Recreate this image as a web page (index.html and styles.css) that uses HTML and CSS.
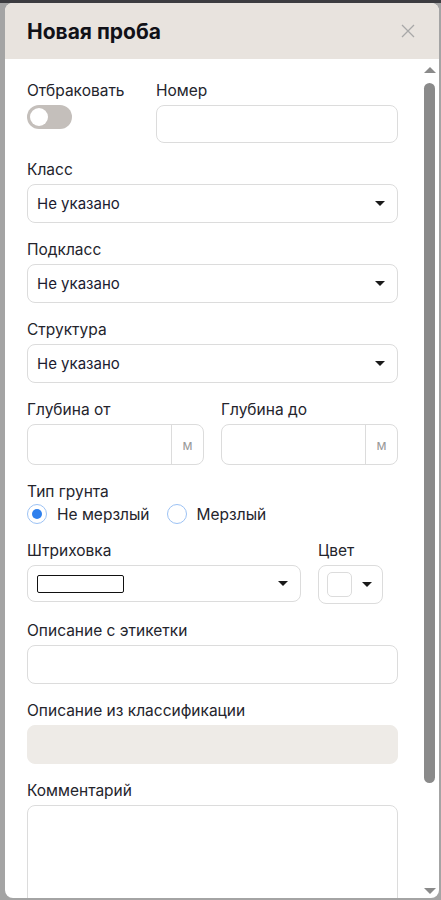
FILE: index.html
```html
<!DOCTYPE html>
<html lang="ru">
<head>
<meta charset="utf-8">
<title>Новая проба</title>
<link rel="stylesheet" href="styles.css">
</head>
<body>
<div class="topline"></div>
<div class="modal">
  <div class="modal-header">
    <h1 class="title">Новая проба</h1>
    <span class="close" aria-label="Закрыть">
      <svg width="14" height="14" viewBox="0 0 14 14"><path d="M1 1L13 13M13 1L1 13" stroke="#a8a8a8" stroke-width="1.3" fill="none"/></svg>
    </span>
  </div>
  <div class="modal-body">
    <div class="content">
      <div class="row row-first">
        <div class="field">
          <label class="label">Отбраковать</label>
          <span class="toggle"><span class="knob"></span></span>
        </div>
        <div class="field">
          <label class="label">Номер</label>
          <div class="input"></div>
        </div>
      </div>

      <div class="field">
        <label class="label">Класс</label>
        <div class="input select"><span class="value">Не указано</span><span class="caret"></span></div>
      </div>
      <div class="field">
        <label class="label">Подкласс</label>
        <div class="input select"><span class="value">Не указано</span><span class="caret"></span></div>
      </div>
      <div class="field">
        <label class="label">Структура</label>
        <div class="input select"><span class="value">Не указано</span><span class="caret"></span></div>
      </div>

      <div class="row row-half">
        <div class="field">
          <label class="label">Глубина от</label>
          <div class="input suffixed tall"><span class="grow"></span><span class="suffix">м</span></div>
        </div>
        <div class="field">
          <label class="label">Глубина до</label>
          <div class="input suffixed tall"><span class="grow"></span><span class="suffix">м</span></div>
        </div>
      </div>

      <div class="field field-radio">
        <label class="label">Тип грунта</label>
        <div class="radios">
          <span class="radio checked"><span class="circle"></span>Не мерзлый</span>
          <span class="radio"><span class="circle"></span>Мерзлый</span>
        </div>
      </div>

      <div class="row row-hatch">
        <div class="field">
          <label class="label">Штриховка</label>
          <div class="input select hatch"><span class="pattern"></span><span class="caret"></span></div>
        </div>
        <div class="field">
          <label class="label">Цвет</label>
          <div class="input color"><span class="swatch"></span><span class="caret"></span></div>
        </div>
      </div>

      <div class="field">
        <label class="label">Описание с этикетки</label>
        <div class="input"></div>
      </div>
      <div class="field">
        <label class="label">Описание из классификации</label>
        <div class="input disabled"></div>
      </div>
      <div class="field">
        <label class="label">Комментарий</label>
        <div class="input textarea"></div>
      </div>
    </div>
    <div class="scrollbar">
      <span class="arrow up"></span>
      <span class="thumb"></span>
      <span class="spacer"></span>
      <span class="arrow down"></span>
    </div>
  </div>
</div>
</body>
</html>
```

FILE: styles.css
```css
html, body {
  margin: 0;
  padding: 0;
}
body {
  background: #a4a4a4;
  font-family: Inter, "Noto Sans", "Liberation Sans", sans-serif;
  color: #1d1d28;
  height: 900px;
  overflow: hidden;
}
.topline {
  height: 3px;
  background: #3c3c40;
}
.modal {
  margin-left: 5px;
  width: 434px;
  height: 895px;
  background: #fff;
  border-radius: 8px;
  overflow: hidden;
  display: flex;
  flex-direction: column;
}
.modal-header {
  height: 56px;
  flex: none;
  background: #e8e3de;
  display: flex;
  align-items: center;
  justify-content: space-between;
  padding: 0 24px 0 22px;
}
.title {
  margin: 0;
  font-size: 21px;
  font-weight: 700;
  color: #111118;
}
.close {
  display: flex;
  width: 14px;
  height: 14px;
}
.modal-body {
  flex: 1;
  display: flex;
  min-height: 0;
}
.content {
  width: 371px;
  padding: 22px 0 0 22px;
  display: flex;
  flex-direction: column;
  gap: 17px;
}
.field {
  display: flex;
  flex-direction: column;
  gap: 4px;
  min-width: 0;
}
.label {
  font-size: 15.5px;
  line-height: 20px;
  color: #24242c;
}
.row {
  display: grid;
  column-gap: 17px;
}
.row-first {
  grid-template-columns: 112px 1fr;
}
.row-half {
  grid-template-columns: 1fr 1fr;
}
.row-hatch {
  grid-template-columns: 274px 65px;
}
.input {
  box-sizing: border-box;
  height: 39px;
  border: 1px solid #dcdcdc;
  border-radius: 8px;
  background: #fff;
  display: flex;
  align-items: center;
}
.row-first .input {
  height: 38px;
}
.tall {
  height: 41px;
}
.select {
  padding: 0 12px 0 9px;
  justify-content: space-between;
}
.value {
  font-size: 15px;
  color: #1b1b30;
}
.caret {
  width: 0;
  height: 0;
  border-left: 5px solid transparent;
  border-right: 5px solid transparent;
  border-top: 5px solid #1a1a1a;
}
.toggle {
  width: 45px;
  height: 24px;
  border-radius: 12px;
  background: #c4bfbb;
  display: flex;
  align-items: center;
  padding-left: 3px;
  box-sizing: border-box;
}
.knob {
  width: 18px;
  height: 18px;
  border-radius: 50%;
  background: #fff;
}
.suffixed {
  align-items: stretch;
}
.grow {
  flex: 1;
}
.suffix {
  width: 31px;
  border-left: 1px solid #dcdcdc;
  display: flex;
  align-items: center;
  justify-content: center;
  font-size: 13px;
  color: #9a9a9a;
}
.field-radio {
  gap: 2px;
}
.radios {
  display: flex;
  gap: 17px;
  height: 20px;
  align-items: center;
}
.radio {
  display: flex;
  align-items: center;
  gap: 10px;
  font-size: 15.5px;
  color: #24242c;
}
.circle {
  box-sizing: border-box;
  width: 20px;
  height: 20px;
  border-radius: 50%;
  border: 1.5px solid #9cc2f4;
  background: #fff;
  display: flex;
  align-items: center;
  justify-content: center;
}
.checked .circle::after {
  content: "";
  width: 10px;
  height: 10px;
  border-radius: 50%;
  background: #2f80ed;
}
.hatch {
  height: 37px;
}
.pattern {
  box-sizing: border-box;
  width: 87px;
  height: 18px;
  border: 1px solid #111;
  border-radius: 2px;
  background: #fff;
}
.color {
  height: 39px;
  padding: 0 10px 0 8px;
  justify-content: space-between;
}
.swatch {
  box-sizing: border-box;
  width: 25px;
  height: 25px;
  border: 1px solid #dcdcdc;
  border-radius: 5px;
  background: #fff;
}
.disabled {
  background: #eeebe7;
  border-color: #eeebe7;
}
.textarea {
  height: 110px;
  align-items: flex-start;
}
.scrollbar {
  margin-left: 26px;
  width: 11px;
  display: flex;
  flex-direction: column;
  align-items: center;
  padding-top: 8px;
  padding-bottom: 4px;
}
.arrow {
  width: 0;
  height: 0;
  border-left: 6px solid transparent;
  border-right: 6px solid transparent;
  flex: none;
}
.arrow.up {
  border-bottom: 6px solid #8a8a8a;
  margin-bottom: 10px;
}
.arrow.down {
  border-top: 6px solid #8a8a8a;
}
.thumb {
  width: 11px;
  height: 700px;
  border-radius: 6px;
  background: #8a8a8a;
  flex: none;
}
.spacer {
  flex: 1;
}
```
